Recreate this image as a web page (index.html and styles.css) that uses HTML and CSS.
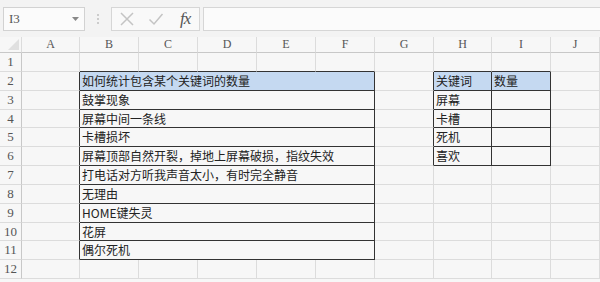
FILE: index.html
```html
<!DOCTYPE html>
<html lang="zh-CN">
<head>
  <meta charset="UTF-8" />
  <title>Sheet</title>
  <link rel="stylesheet" href="styles.css">
</head>
<body>
  <div class="toolbar">
    <div class="namebox">
      <span>I3</span>
      <svg class="caret" width="7" height="4" viewBox="0 0 7 4"><path d="M0 0H7L3.5 4Z" fill="#888"/></svg>
    </div>
    <div class="grip"><i></i><i></i><i></i></div>
    <div class="fx-buttons">
      <svg width="16" height="16" viewBox="0 0 16 16"><path d="M2 2L14 14M14 2L2 14" stroke="#c4c4c4" stroke-width="1.5" fill="none"/></svg>
      <svg width="16" height="16" viewBox="0 0 16 16"><path d="M1.5 8.5L6 13L14.5 3" stroke="#c4c4c4" stroke-width="1.5" fill="none"/></svg>
      <span class="fx">fx</span>
    </div>
    <div class="formula"></div>
  </div>

  <div class="sheet" id="sheet"></div>

  <script>
    const cols = ['A','B','C','D','E','F','G','H','I','J'];
    const list = ['如何统计包含某个关键词的数量','鼓掌现象','屏幕中间一条线','卡槽损坏',
      '屏幕顶部自然开裂，掉地上屏幕破损，指纹失效','打电话对方听我声音太小，有时完全静音',
      '无理由','HOME键失灵','花屏','偶尔死机'];
    const keys = ['关键词','屏幕','卡槽','死机','喜欢'];
    const sheet = document.getElementById('sheet');

    function cell(cls, text) {
      const d = document.createElement('div');
      d.className = 'cell ' + (cls || '');
      d.textContent = text || '';
      sheet.appendChild(d);
    }

    cell('corner');
    cols.forEach(c => cell('colhead', c));

    for (let r = 1; r <= 12; r++) {
      const inList = r >= 2 && r <= 11;
      const inKeys = r >= 2 && r <= 6;
      const head = r == 2 ? ' title' : '';

      cell('rowhead', r);
      cell(inList ? 'edge-r' : '');                        // A

      if (r == 1) {
        for (let i = 0; i < 5; i++) cell('edge-b');        // B..F
        cell('');                                          // G
        cell('edge-b'); cell('edge-b');                    // H, I
        cell('');                                          // J
        continue;
      }
      if (!inList) {
        for (let i = 0; i < 9; i++) cell('');
        continue;
      }

      cell('box wide' + head, list[r - 2]);                // B:F merged
      cell(inKeys ? 'edge-r' : '');                        // G
      if (inKeys) {
        cell('box' + head, keys[r - 2]);                   // H
        cell('box' + head, r == 2 ? '数量' : '');           // I
      } else {
        cell(''); cell('');
      }
      cell('');                                            // J
    }
  </script>
</body>
</html>
```

FILE: styles.css
```css
body { margin:0; background:#f7f7f7; font-family:"Noto Sans CJK SC", "Liberation Sans", sans-serif; overflow:hidden; }

.toolbar { height:37px; display:flex; align-items:center; padding:0 0 0 3px; box-sizing:border-box; background:#f3f3f3; }
.namebox { width:82px; height:24px; box-sizing:border-box; border:1px solid #d2d2d2; background:#fbfbfb; display:flex; align-items:center; justify-content:space-between; padding:0 5px; font-family:"Liberation Serif", serif; font-size:13px; color:#555; }
.grip { width:26px; display:flex; flex-direction:column; align-items:center; gap:2px; }
.grip i { width:2px; height:2px; background:#cccccc; }
.fx-buttons { width:89px; height:24px; box-sizing:border-box; border:1px solid #d6d6d6; background:#f9f9f9; display:flex; align-items:center; padding-left:7px; gap:13px; }
.fx { font-family:"Liberation Serif", serif; font-style:italic; font-size:17px; color:#555; margin-left:3px; letter-spacing:-1px; }
.formula { flex:1; height:24px; margin-left:3px; box-sizing:border-box; border:1px solid #d6d6d6; border-right:none; background:#fbfbfb; }

.sheet { display:grid; grid-template-columns:22px 58px repeat(6, 59px) 58px 59px 1fr;
  grid-template-rows:16px 19px 19px 19px 18px 19px 19px 19px 19px 19px 18px 19px 19px; }
.cell { box-sizing:border-box; border-right:1px solid #dcdcdc; border-bottom:1px solid #dcdcdc; font-size:12px; color:#222; white-space:nowrap; overflow:hidden; line-height:17px; padding-left:2px; }
.colhead { font-family:"Liberation Serif", serif; font-size:12px; color:#555; text-align:center; padding:0; line-height:15px; border-bottom-color:#c8c8c8; }
.corner { position:relative; border-bottom-color:#c8c8c8; }
.corner::after { content:""; position:absolute; right:2px; bottom:2px; border-left:11px solid transparent; border-bottom:11px solid #e0e0e0; }
.rowhead { font-family:"Liberation Serif", serif; font-size:13px; color:#555; text-align:center; padding:0; border-right-color:#c8c8c8; }

.wide { grid-column:span 5; }
.box { border-right-color:#333; border-bottom-color:#333; }
.title { background:#c5d9f1; }
.edge-r { border-right-color:#333; }
.edge-b { border-bottom-color:#333; }
```
